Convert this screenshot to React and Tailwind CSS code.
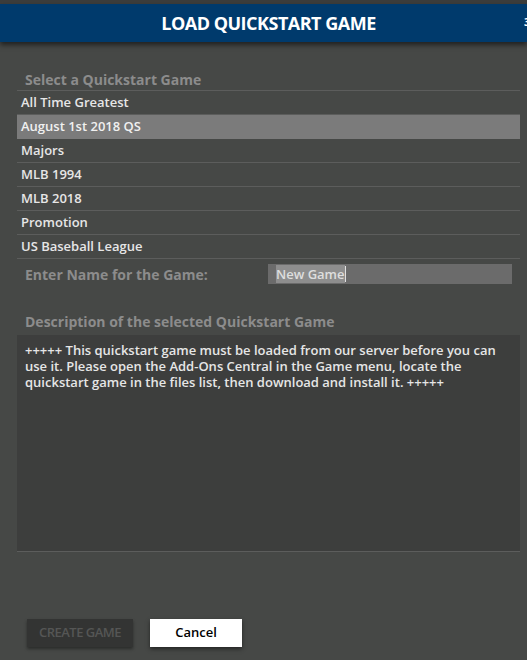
export default function App() {
  const items = [
    "All Time Greatest",
    "August 1st 2018 QS",
    "Majors",
    "MLB 1994",
    "MLB 2018",
    "Promotion",
    "US Baseball League",
  ];
  return (
    <div
      className="w-[527px] h-[660px] bg-[#464846] flex flex-col overflow-hidden"
      style={{ fontFamily: '"Open Sans", "Noto Sans", sans-serif' }}
    >
      <div className="h-[4px] bg-[#3c3d3c] shrink-0" />
      <div className="relative h-[38px] shrink-0 bg-[#003a6c] flex items-center justify-center pl-[10px] shadow-[0_3px_5px_rgba(0,0,0,0.55)] z-10">
        <span className="text-white text-[18px] font-bold tracking-[-0.5px]">LOAD QUICKSTART GAME</span>
        <span className="absolute right-[0px] top-[11px] w-[3px] overflow-hidden text-white text-[11px] font-bold leading-[14px]">3</span>
      </div>
      <div className="flex flex-col pl-[17px] pr-[7px] pt-[26px]">
        <div className="h-[23px] pl-[8px] flex items-center text-[14px] font-bold text-[#8c8c8c] border-b border-[#5c5d5c]">
          Select a Quickstart Game
        </div>
        {items.map((t, i) => (
          <div
            key={t}
            className={
              i === 1
                ? "h-[24px] pl-[4px] flex items-center text-[13px] font-semibold text-[#f0f0f0] bg-[#7b7b7b] border-b border-[#7b7b7b]"
                : "h-[24px] pl-[4px] flex items-center text-[13px] font-semibold text-[#e6e6e6] border-b border-[#5c5d5c]"
            }
          >
            {t}
          </div>
        ))}
        <div className="flex items-center h-[22px] mt-[4px]">
          <div className="w-[251px] pl-[8px] text-[14px] font-bold text-[#8c8c8c]">
            Enter Name for the Game:
          </div>
          <div className="w-[244px] h-[20px] bg-[#6b6b6b] flex items-center pl-[8px]">
            <span className="bg-[#8e8e8e] text-[#dedede] text-[13px] font-semibold leading-[18px]">New Game</span>
            <span className="w-[1px] h-[16px] bg-[#e0e0e0]" />
          </div>
        </div>
        <div className="h-[24px] mt-[24px] pl-[8px] flex items-center text-[14px] font-bold text-[#8c8c8c]">
          Description of the selected Quickstart Game
        </div>
        <div className="h-[217px] mt-[2px] bg-[#3d3e3d] border-b border-[#5c5d5c] pl-[8px] pr-[14px] pt-[7px] text-[13px] font-semibold leading-[16px] text-[#e6e6e6]">
          +++++ This quickstart game must be loaded from our server before you can use it. Please open the Add-Ons Central in the Game menu, locate the quickstart game in the files list, then download and install it. +++++
        </div>
      </div>
      <div className="flex gap-[17px] pl-[27px] mt-[67px]">
        <div className="w-[106px] h-[28px] bg-[#333433] shadow-[0_2px_3px_rgba(0,0,0,0.4)] flex items-center justify-center text-[13px] font-semibold text-[#555655] tracking-[-0.5px]">
          CREATE GAME
        </div>
        <div className="w-[92px] h-[28px] bg-white shadow-[0_2px_4px_rgba(0,0,0,0.5)] flex items-center justify-center text-[13px] font-semibold text-black">
          Cancel
        </div>
      </div>
    </div>
  );
}
